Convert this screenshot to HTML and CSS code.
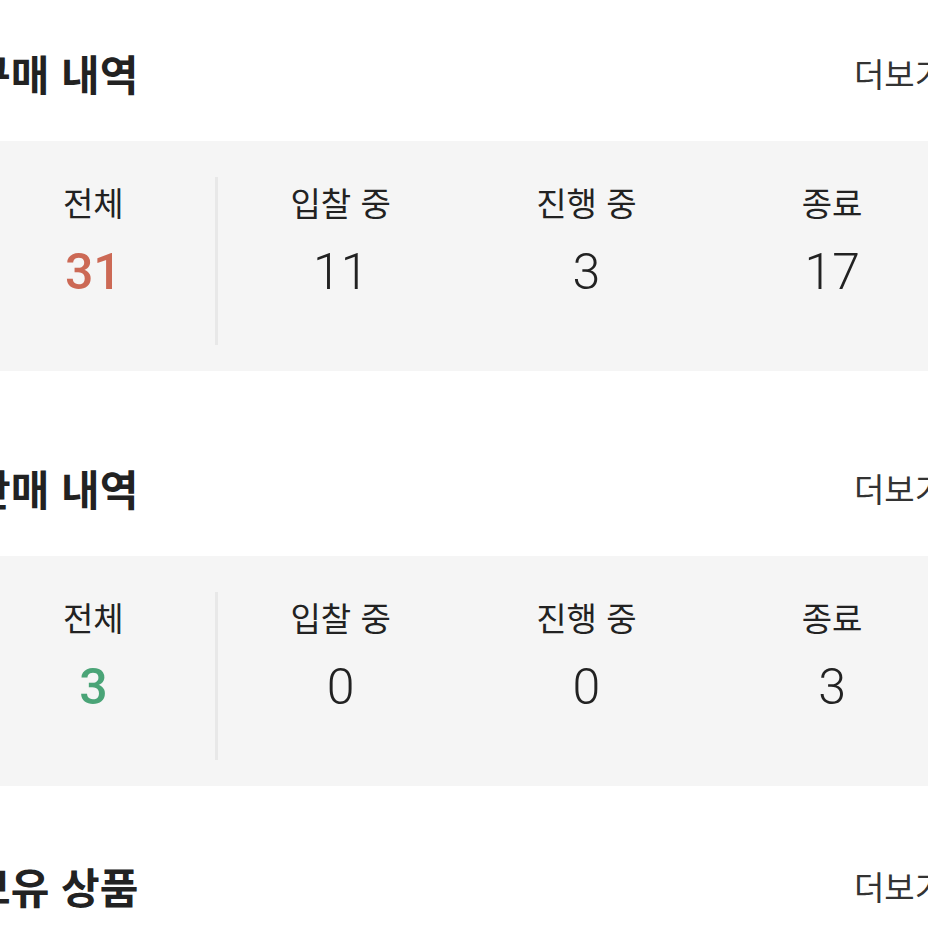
FILE: index.html
```html
<!DOCTYPE html>
<html lang="ko">
<head>
<meta charset="utf-8">
<title>내 거래</title>
<link rel="stylesheet" href="styles.css">
</head>
<body>
<main class="page">
  <section class="block block-buy">
    <header class="block-head">
      <h2 class="block-title">구매 내역</h2>
      <a class="more" href="#">더보기</a>
    </header>
    <div class="stats">
      <div class="stat stat-total">
        <span class="stat-label">전체</span>
        <span class="stat-num num-buy">31</span>
      </div>
      <div class="stat">
        <span class="stat-label">입찰 중</span>
        <span class="stat-num">11</span>
      </div>
      <div class="stat">
        <span class="stat-label">진행 중</span>
        <span class="stat-num">3</span>
      </div>
      <div class="stat">
        <span class="stat-label">종료</span>
        <span class="stat-num">17</span>
      </div>
    </div>
  </section>

  <section class="block block-sell">
    <header class="block-head">
      <h2 class="block-title">판매 내역</h2>
      <a class="more" href="#">더보기</a>
    </header>
    <div class="stats">
      <div class="stat stat-total">
        <span class="stat-label">전체</span>
        <span class="stat-num num-sell">3</span>
      </div>
      <div class="stat">
        <span class="stat-label">입찰 중</span>
        <span class="stat-num">0</span>
      </div>
      <div class="stat">
        <span class="stat-label">진행 중</span>
        <span class="stat-num">0</span>
      </div>
      <div class="stat">
        <span class="stat-label">종료</span>
        <span class="stat-num">3</span>
      </div>
    </div>
  </section>

  <section class="block">
    <header class="block-head">
      <h2 class="block-title">보유 상품</h2>
      <a class="more" href="#">더보기</a>
    </header>
  </section>
</main>
</body>
</html>
```

FILE: styles.css
```css
html, body {
  margin: 0;
  padding: 0;
  background: #ffffff;
  overflow: hidden;
}

body {
  font-family: "Noto Sans CJK KR", "Noto Sans", sans-serif;
  color: #222222;
}

.page {
  width: 983px;
  margin-left: -28px;
  padding-top: 44px;
}

.block-buy {
  margin-bottom: 88px;
}

.block-sell {
  margin-bottom: 71px;
}

.block-head {
  display: flex;
  justify-content: space-between;
  align-items: center;
  height: 58px;
  margin-bottom: 39px;
}

.block-title {
  margin: 0;
  font-size: 42px;
  font-weight: 700;
  line-height: 58px;
  color: #222222;
}

.more {
  font-size: 33px;
  line-height: 58px;
  color: #333333;
  text-decoration: none;
  margin-right: 10px;
}

.stats {
  display: grid;
  grid-template-columns: repeat(4, 1fr);
  background: #f5f5f5;
  padding: 36px 0 26px;
}

.stat {
  display: flex;
  flex-direction: column;
  align-items: center;
  min-height: 168px;
}

.stat-total {
  border-right: 3px solid #e8e8e8;
}

.stat-label {
  font-size: 33px;
  line-height: 50px;
  color: #222222;
}

.stat-num {
  font-family: Roboto, "Noto Sans", sans-serif;
  font-size: 50px;
  font-weight: 300;
  line-height: 84px;
  padding-top: 3px;
  color: #222222;
}

.num-buy {
  color: #cc6955;
  font-weight: 500;
}

.num-sell {
  color: #4aa477;
  font-weight: 500;
}
```
